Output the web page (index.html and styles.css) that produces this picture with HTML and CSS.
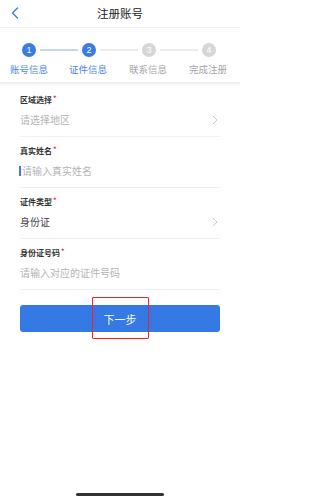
FILE: index.html
```html
<!DOCTYPE html>
<html lang="zh">
<head>
<meta charset="utf-8">
<link rel="stylesheet" href="styles.css">
</head>
<body>
<div class="page">
  <header class="nav">
    <svg class="back" width="8" height="12" viewBox="0 0 8 12"><path d="M6.5 1 L1.5 6 L6.5 11" fill="none" stroke="#3b7be6" stroke-width="1.4" stroke-linecap="round" stroke-linejoin="round"/></svg>
    <div class="title">注册账号</div>
  </header>

  <section class="steps">
    <div class="step-row">
      <span class="dot on">1</span>
      <span class="line half"></span>
      <span class="dot on">2</span>
      <span class="line"></span>
      <span class="dot">3</span>
      <span class="line"></span>
      <span class="dot">4</span>
    </div>
    <div class="label-row">
      <span class="slabel on">账号信息</span>
      <span class="slabel on">证件信息</span>
      <span class="slabel">联系信息</span>
      <span class="slabel">完成注册</span>
    </div>
  </section>
  <div class="band"></div>

  <form class="form">
    <div class="field">
      <div class="flabel">区域选择<i>*</i></div>
      <div class="finput"><span class="ph">请选择地区</span><svg class="chev" width="6" height="10" viewBox="0 0 6 10"><path d="M1 1 L5 5 L1 9" fill="none" stroke="#c4c4c4" stroke-width="0.9"/></svg></div>
    </div>
    <div class="field">
      <div class="flabel">真实姓名<i>*</i></div>
      <div class="finput"><span class="cursor"></span><span class="ph">请输入真实姓名</span></div>
    </div>
    <div class="field">
      <div class="flabel">证件类型<i>*</i></div>
      <div class="finput"><span class="val">身份证</span><svg class="chev" width="6" height="10" viewBox="0 0 6 10"><path d="M1 1 L5 5 L1 9" fill="none" stroke="#c4c4c4" stroke-width="0.9"/></svg></div>
    </div>
    <div class="field">
      <div class="flabel">身份证号码<i>*</i></div>
      <div class="finput"><span class="ph">请输入对应的证件号码</span></div>
    </div>
    <div class="btn-wrap">
      <div class="btn">下一步</div>
      <div class="mark"></div>
    </div>
  </form>

  <div class="home"></div>
</div>
</body>
</html>
```

FILE: styles.css
```css
* { box-sizing: border-box; margin: 0; padding: 0; }
html, body { background: #fff; }
body {
  font-family: "Noto Sans CJK SC", "Noto Sans", sans-serif;
  width: 240px; height: 500px; overflow: hidden;
}
.page { position: relative; width: 240px; height: 500px; display: flex; flex-direction: column; }
.nav {
  position: relative; height: 28px; border-bottom: 1px solid #f2f2f2;
  display: flex; align-items: center; justify-content: center; flex: none;
}
.back { position: absolute; left: 11px; top: 7px; }
.title { font-size: 11.5px; color: #222; line-height: 14px; margin-top: -2px; }

.steps { padding-top: 15px; height: 54px; flex: none; }
.step-row { display: flex; align-items: center; padding-left: 22px; height: 14px; }
.dot {
  width: 14px; height: 14px; border-radius: 50%; background: #d6d6d8;
  color: #fff; font-family: "Liberation Sans", sans-serif; font-size: 9px;
  display: flex; align-items: center; justify-content: center; flex: none;
}
.dot.on { background: #3a7be6; }
.line { width: 38px; height: 1.5px; background: #ececee; margin: 0 4px; flex: none; }
.line.half { background: #c8d5e4; }
.label-row { display: flex; margin-top: 6px; height: 12px; }
.slabel { width: 60px; text-align: center; font-size: 9.5px; line-height: 12px; color: #a6a6a8; }
.slabel:first-child { width: 58px; }
.slabel.on { color: #4a86e8; }

.band { height: 4px; background: linear-gradient(#efefef, #f6f6f6 60%, #fff); flex: none; }

.form { padding: 0 20px; display: flex; flex-direction: column; }
.field { padding-top: 8px; padding-bottom: 6px; border-bottom: 1px solid #f1f1f1; }
.flabel { font-size: 8px; height: 12px; line-height: 12px; font-weight: 700; color: #333; overflow: visible; }
.flabel i { font-style: normal; color: #e53935; font-size: 7px; line-height: 0; position: relative; top: -2px; margin-left: 1px; }
.finput { margin-top: 4px; height: 20px; line-height: 20px; display: flex; align-items: center; }
.ph { font-size: 10px; color: #b4b4b6; }
.val { font-size: 10px; color: #444; }
.chev { margin-left: auto; margin-right: 2px; }
.cursor { width: 1.5px; height: 10px; background: #3a7be6; margin-right: 1.5px; margin-left: -1px; }

.btn-wrap { position: relative; margin-top: 15px; }
.btn {
  height: 27px; border-radius: 3px; background: #3579e4; color: #fff;
  font-size: 11px; display: flex; align-items: center; justify-content: center;
}
.mark {
  position: absolute; left: 72px; top: -8px; width: 57px; height: 42px;
  border: 1px solid #f52020; border-radius: 1px;
}
.home {
  position: absolute; left: 76px; top: 493px; width: 88px; height: 2.5px;
  background: #333; border-radius: 2px;
}
```
